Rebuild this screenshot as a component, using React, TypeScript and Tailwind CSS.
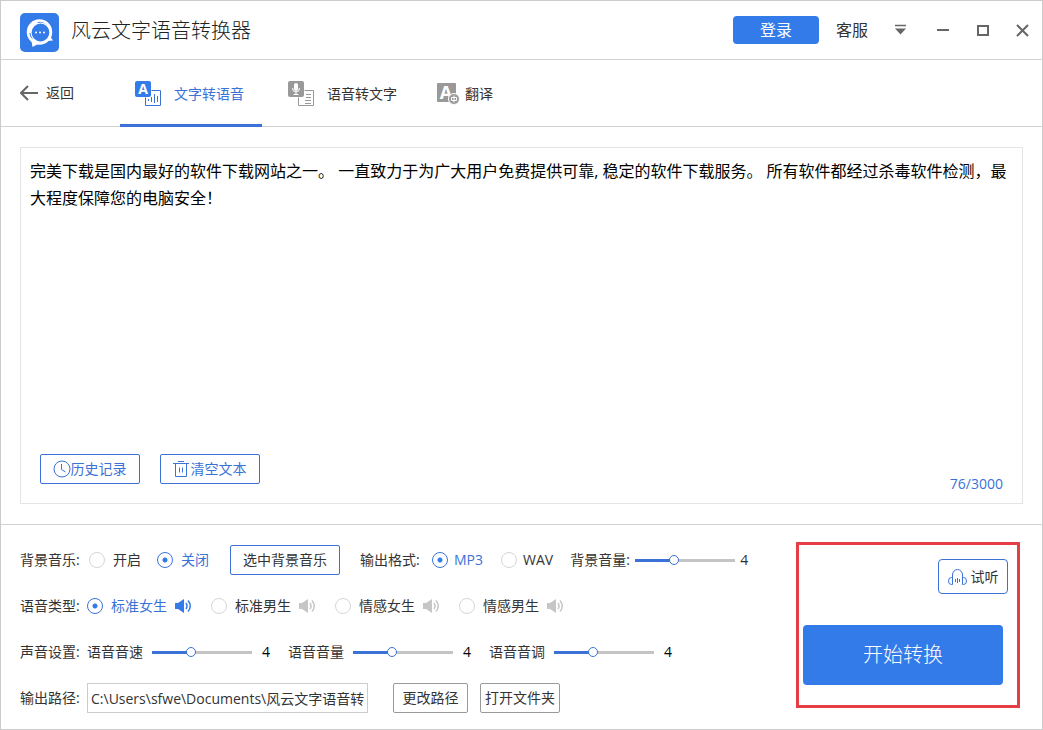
import { useState } from 'react';
import type { ReactNode } from 'react';
import clsx from 'clsx';

const BLUE = '#3a72d8';

function LogoIcon() {
  return (
    <svg viewBox="0 0 39 39" className="size-[39px] shrink-0" aria-hidden="true">
      <rect width="39" height="39" rx="5" fill="#347bea" />
      <circle cx="19.500" cy="19" r="11.500" fill="none" stroke="#fff" strokeWidth="2.500" />
      <circle cx="20.500" cy="19.500" r="9.500" fill="none" stroke="#fff" strokeWidth="1.200" />
      <path d="M11 25l1.500 9 7.500-4z" fill="#fff" />
      <path d="M29 22l4 5.500-6 .5z" fill="#fff" />
      <path d="M9.500 20a10.500 10.500 0 0 1 8-11" fill="none" stroke="#fff" strokeWidth="3" />
      <g fill="#fff">
        <circle cx="16" cy="19.500" r="1" />
        <circle cx="20" cy="19.500" r="1" />
        <circle cx="24" cy="19.500" r="1" />
      </g>
    </svg>
  );
}

function TextToVoiceIcon() {
  return (
    <svg viewBox="0 0 26 26" className="size-[26px] shrink-0" aria-hidden="true">
      <path d="M16.500 9.500h9v15h-15v-8" fill="none" stroke={BLUE} />
      <path d="M13.500 18v2M16.500 16v5M19.500 13v9M22.500 15v6" stroke={BLUE} />
      <rect width="16" height="16" rx="2" fill="#347bea" />
      <text x="8" y="13" textAnchor="middle" fontSize="14" fontWeight="700" fill="#fff">A</text>
    </svg>
  );
}

function VoiceToTextIcon() {
  return (
    <svg viewBox="0 0 26 26" className="size-[26px] shrink-0" aria-hidden="true">
      <path d="M16.500 9.500h9v15h-15v-8" fill="none" stroke="#999" />
      <path d="M18 13.500h5M18 16.500h5M17 19.500h6M17 22.500h6" stroke="#999" />
      <rect width="16" height="16" rx="2" fill="#999" />
      <rect x="6" y="2" width="4" height="8" rx="2" fill="#fff" />
      <path d="M4.500 7a3.500 4 0 0 0 7 0M8 11v2.500M5.500 13.500h5" fill="none" stroke="#fff" />
    </svg>
  );
}

function TranslateIcon() {
  return (
    <svg viewBox="0 0 23 22" className="h-[22px] w-[23px] shrink-0 overflow-visible" aria-hidden="true">
      <rect width="19" height="19" rx="1" fill="#999" />
      <text x="9" y="16" textAnchor="middle" fontSize="18" fontWeight="700" fill="#fff">A</text>
      <circle cx="17" cy="16" r="5.500" fill="#999" stroke="#fff" />
      <path d="M14.500 14.500h5v3h-5zM17 12.500v7" fill="none" stroke="#fff" />
    </svg>
  );
}

function SpeakerIcon({ active }: { active: boolean }) {
  return (
    <svg
      viewBox="0 0 17 14"
      className={clsx('h-[14px] w-[17px] shrink-0', active ? 'text-[#347bea]' : 'text-[#c6c6c6]')}
      aria-hidden="true"
    >
      <path d="M0 4h3v6H0zM3 4l6-4v14l-6-4z" fill="currentColor" />
      <path d="M11 4q2 3 0 6M13 1.500q4.500 5.500 0 11" fill="none" stroke="currentColor" strokeWidth="1.500" />
    </svg>
  );
}

function HeadphoneIcon() {
  return (
    <svg viewBox="0 0 19 16" className="h-4 w-[19px] shrink-0" fill="none" stroke={BLUE} aria-hidden="true">
      <path d="M4.500 15.500V6a5 5.500 0 0 1 10 0v9.500" />
      <path d="M4.500 8.500h-1a3 3.500 0 0 0 0 7h1M14.500 8.500h1a3 3.500 0 0 1 0 7h-1M7.500 10v3M9.500 9v5M11.500 10v3" />
    </svg>
  );
}

interface RadioProps {
  name: string;
  label: string;
  checked: boolean;
  onChange: () => void;
  className?: string;
  children?: ReactNode;
}

function Radio({ name, label, checked, onChange, className = 'gap-2', children }: RadioProps) {
  return (
    <label className={clsx('flex items-center', className, checked && 'text-[#3a72d8]')}>
      <input
        type="radio"
        name={name}
        checked={checked}
        onChange={onChange}
        className="size-4 shrink-0 appearance-none rounded-full border border-[#d6d6d6] bg-white checked:border-[#3a72d8] checked:bg-[radial-gradient(circle,#347bea_2px,transparent_3px)]"
      />
      {label}
      {children}
    </label>
  );
}

function Slider({ label, value, onChange }: { label: string; value: number; onChange: (v: number) => void }) {
  const percent = ((value - 1) / 8) * 100;
  return (
    <input
      type="range"
      min={1}
      max={9}
      aria-label={label}
      value={value}
      onChange={(e) => onChange(Number(e.target.value))}
      style={{ background: `linear-gradient(to right, ${BLUE} ${percent}%, #c4c4c4 ${percent}%)` }}
      className="h-[3px] w-[100px] shrink-0 appearance-none [&::-webkit-slider-thumb]:size-[10px] [&::-webkit-slider-thumb]:appearance-none [&::-webkit-slider-thumb]:rounded-full [&::-webkit-slider-thumb]:border [&::-webkit-slider-thumb]:border-[#3a72d8] [&::-webkit-slider-thumb]:bg-white"
    />
  );
}

const tabs = [
  { id: 'tts', label: '文字转语音', icon: <TextToVoiceIcon />, className: 'gap-[13px] pl-[15px] pr-[18px]' },
  { id: 'stt', label: '语音转文字', icon: <VoiceToTextIcon />, className: 'gap-[13px] px-[26px]' },
  { id: 'translate', label: '翻译', icon: <TranslateIcon />, className: 'gap-[5px] px-[14px]' },
];

const voices = ['标准女生', '标准男生', '情感女生', '情感男生'];
const sliders = ['语音音速', '语音音量', '语音音调'];

const sample =
  '完美下载是国内最好的软件下载网站之一。 一直致力于为广大用户免费提供可靠, 稳定的软件下载服务。 所有软件都经过杀毒软件检测，最大程度保障您的电脑安全！';

export default function App() {
  const [tab, setTab] = useState('tts');
  const [text, setText] = useState(sample);
  const [music, setMusic] = useState('关闭');
  const [format, setFormat] = useState('MP3');
  const [volume, setVolume] = useState(4);
  const [voice, setVoice] = useState(voices[0]);
  const [levels, setLevels] = useState([4, 4, 4]);
  const [path, setPath] = useState('C:\\Users\\sfwe\\Documents\\风云文字语音转换器');

  return (
    <div className="flex min-h-screen flex-col border border-[#ccc] bg-white font-['Open_Sans','Noto_Sans_CJK_SC',sans-serif] text-sm whitespace-nowrap text-[#333]">
      <header className="flex h-[59px] items-center border-b border-[#d2d2d2] pr-[13px] pl-[19px]">
        <div className="flex items-center gap-3 pt-[5px]">
          <LogoIcon />
          <h1 className="pb-1 text-xl leading-7 font-light text-[#222]">风云文字语音转换器</h1>
        </div>
        <div className="ml-auto flex items-center text-base">
          <button className="h-7 w-[86px] rounded-sm bg-[#347bea] text-white">登录</button>
          <a href="#service" className="ml-[17px]">客服</a>
          <div className="ml-[26px] flex items-center gap-[27px] text-[#666]">
            <button aria-label="菜单" className="mr-[2px]">
              <svg viewBox="0 0 13 13" className="size-[13px]">
                <path d="M1 1.500h11" stroke="currentColor" strokeWidth="1.500" />
                <path d="M1 4.500h11l-5.500 6z" fill="currentColor" />
              </svg>
            </button>
            <button aria-label="最小化">
              <svg viewBox="0 0 13 13" className="size-[13px]">
                <path d="M1 6h12" stroke="currentColor" strokeWidth="2" />
              </svg>
            </button>
            <button aria-label="最大化">
              <svg viewBox="0 0 13 13" className="size-[13px]">
                <path d="M2 2h10v9H2z" fill="none" stroke="currentColor" strokeWidth="2" />
              </svg>
            </button>
            <button aria-label="关闭窗口">
              <svg viewBox="0 0 13 13" className="size-[13px]">
                <path d="M1 1l11 11M12 1L1 12" stroke="currentColor" strokeWidth="2" />
              </svg>
            </button>
          </div>
        </div>
      </header>

      <nav className="flex h-[67px] items-stretch border-b border-[#d2d2d2] pl-[19px]">
        <button className="mr-[46px] flex items-center gap-2">
          <svg viewBox="0 0 18 16" className="h-4 w-[18px]" fill="none" stroke="#666" strokeWidth="2" aria-hidden="true">
            <path d="M18 8H2M8 1L1 8l7 7" />
          </svg>
          返回
        </button>
        {tabs.map((t) => (
          <button
            key={t.id}
            onClick={() => setTab(t.id)}
            className={clsx(
              '-mb-px flex items-center border-b-3 pt-[3px]',
              t.className,
              tab === t.id ? 'border-[#3a72d8] text-[#3a72d8]' : 'border-transparent'
            )}
          >
            {t.icon}
            {t.label}
          </button>
        ))}
      </nav>

      <main className="flex flex-1 flex-col px-[19px] py-5">
        <div className="flex flex-1 flex-col border border-[#e4e4e4]">
          <textarea
            aria-label="转换文本"
            value={text}
            onChange={(e) => setText(e.target.value)}
            className="flex-1 resize-none px-[9px] py-[10px] text-base leading-[27px] whitespace-pre-wrap text-black outline-none"
          />
          <div className="flex items-end gap-5 px-[19px] pb-[9px] text-[#3a72d8]">
            <button className="mb-[10px] flex h-[30px] w-[100px] items-center justify-center rounded-xs border border-[#3a72d8] pr-px">
              <svg viewBox="0 0 18 18" className="size-[18px]" fill="none" stroke="currentColor" aria-hidden="true">
                <circle cx="9" cy="9" r="8" />
                <path d="M8.500 4v5.500l4 2.500" />
              </svg>
              历史记录
            </button>
            <button
              onClick={() => setText('')}
              className="mb-[10px] flex h-[30px] w-[100px] items-center justify-center gap-[2px] rounded-xs border border-[#3a72d8] pr-px"
            >
              <svg viewBox="0 0 16 18" className="h-[18px] w-4" fill="none" stroke="currentColor" aria-hidden="true">
                <path d="M5 1.500h6M0 3.500h16M2.500 4v12.500h11V4M6.500 7.500v5M9.500 7.500v5" />
              </svg>
              清空文本
            </button>
            <span className="ml-auto leading-5">76/3000</span>
          </div>
        </div>
      </main>

      <footer className="flex items-start justify-between border-t border-[#d2d2d2] pr-[22px] pl-[19px]">
        <div className="flex flex-col gap-4 pt-5 pb-4">
          <div className="flex h-[30px] items-center">
            <span className="w-[60px]">背景音乐:</span>
            <div className="ml-[9px] flex gap-4">
              {['开启', '关闭'].map((m) => (
                <Radio key={m} name="music" label={m} checked={music === m} onChange={() => setMusic(m)} />
              ))}
            </div>
            <button className="ml-[21px] h-[30px] w-[110px] rounded-xs border border-[#3a72d8]">选中背景音乐</button>
            <span className="ml-5 w-[60px]">输出格式:</span>
            <div className="ml-3 flex gap-[18px]">
              {['MP3', 'WAV'].map((f) => (
                <Radio
                  key={f}
                  name="format"
                  label={f}
                  checked={format === f}
                  onChange={() => setFormat(f)}
                  className="gap-[6px]"
                />
              ))}
            </div>
            <span className="ml-[17px] w-[60px]">背景音量:</span>
            <span className="ml-[5px] flex items-center gap-[5px]">
              <Slider label="背景音量" value={volume} onChange={setVolume} />
              {volume}
            </span>
          </div>

          <div className="flex h-[30px] items-center">
            <span className="w-[67px]">语音类型:</span>
            <div className="flex gap-[19px]">
              {voices.map((v) => (
                <Radio key={v} name="voice" label={v} checked={voice === v} onChange={() => setVoice(v)}>
                  <SpeakerIcon active={voice === v} />
                </Radio>
              ))}
            </div>
          </div>

          <div className="flex h-[30px] items-center">
            <span className="w-[67px]">声音设置:</span>
            <div className="flex gap-[18px]">
              {sliders.map((s, i) => (
                <div key={s} className="flex items-center">
                  <span className="mr-[9px]">{s}</span>
                  <Slider
                    label={s}
                    value={levels[i]}
                    onChange={(v) => setLevels(levels.map((l, j) => (j === i ? v : l)))}
                  />
                  <span className="ml-[10px] text-black">{levels[i]}</span>
                </div>
              ))}
            </div>
          </div>

          <div className="flex h-[30px] items-center">
            <label htmlFor="path" className="w-[67px]">输出路径:</label>
            <input
              id="path"
              value={path}
              onChange={(e) => setPath(e.target.value)}
              className="h-[30px] w-[281px] border border-[#ccc] px-[3px] outline-none"
            />
            <button className="ml-[25px] h-[30px] w-[75px] rounded-xs border border-[#999]">更改路径</button>
            <button className="ml-3 h-[30px] w-20 rounded-xs border border-[#999]">打开文件夹</button>
          </div>
        </div>

        <div className="mt-[17px] flex flex-col border-3 border-[#e63e47] pt-[14px] pr-[9px] pb-5 pl-1">
          <button className="flex h-[35px] w-[70px] items-center justify-center gap-1 self-end rounded-sm border border-[#3a72d8]">
            <HeadphoneIcon />
            试听
          </button>
          <button className="mt-[31px] mr-[5px] h-[60px] w-[200px] rounded-sm bg-[#347bea] text-xl font-light text-white">
            开始转换
          </button>
        </div>
      </footer>
    </div>
  );
}
